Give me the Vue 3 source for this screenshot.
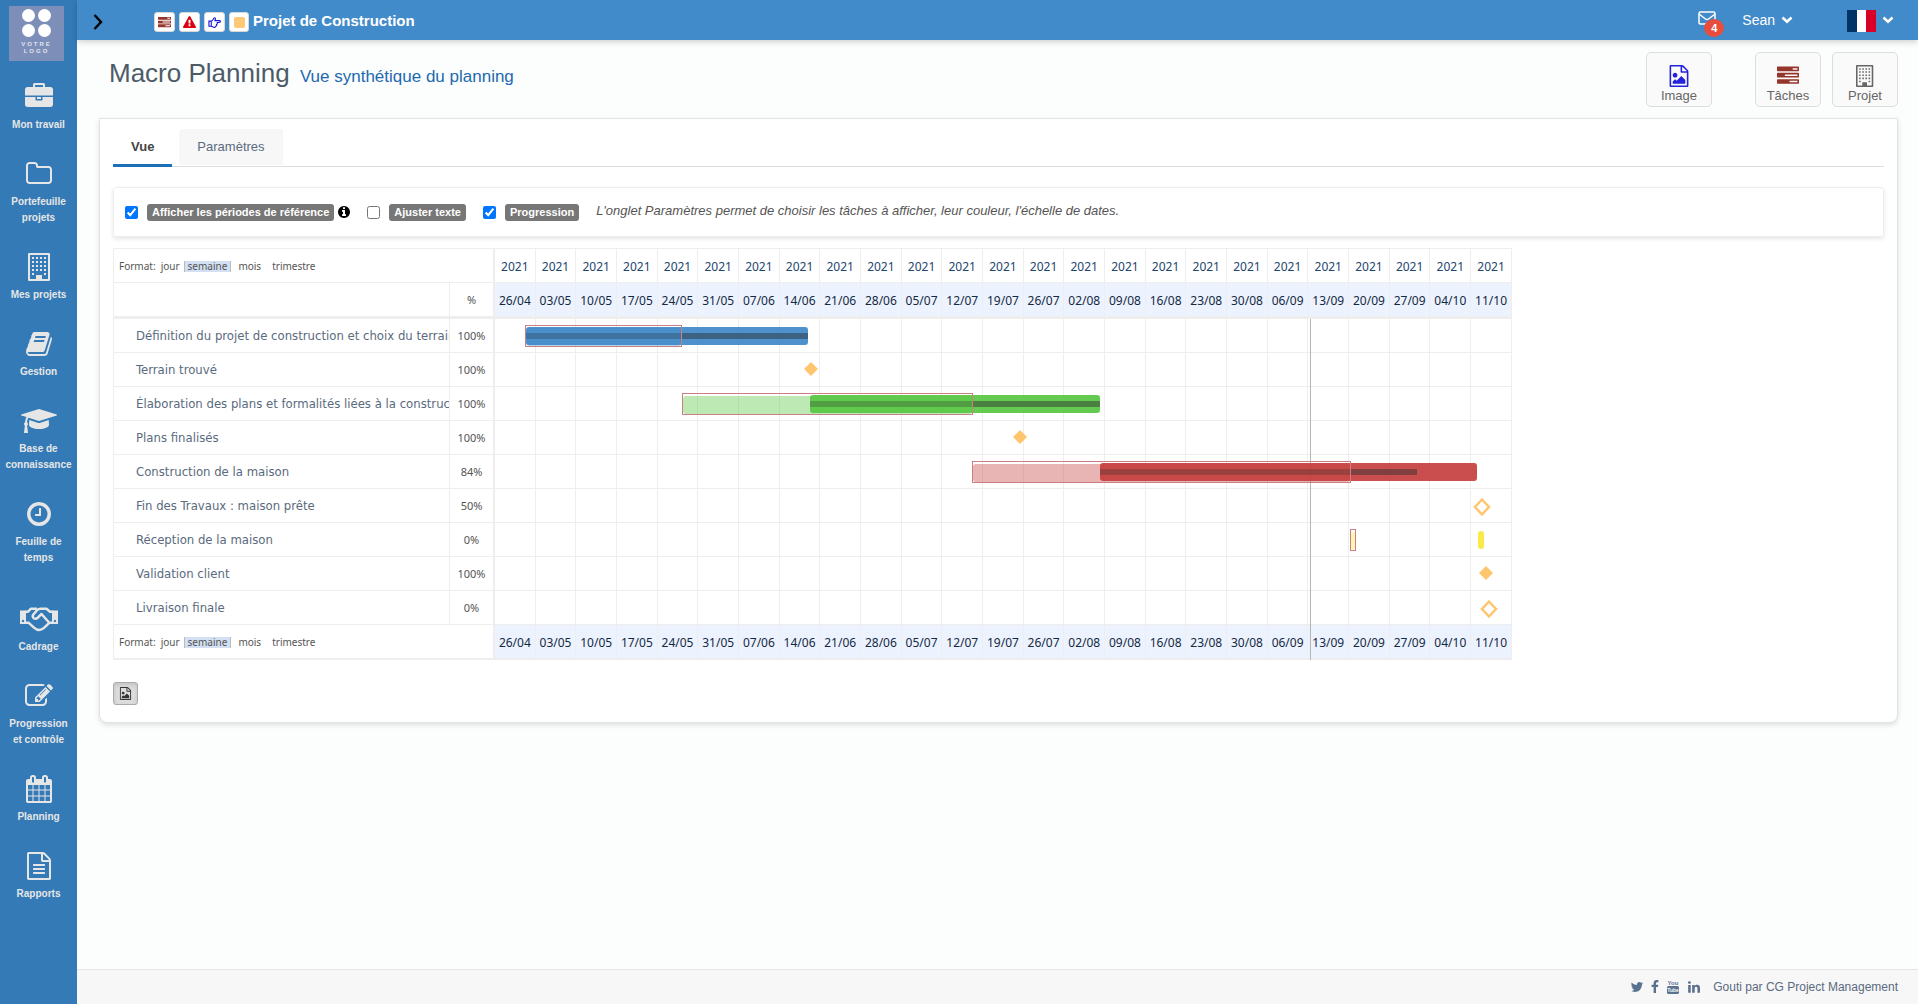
<script setup>
import { ref } from 'vue'

const icons = {
  briefcase: { box: '0 0 1792 1792', d: 'M640 256h512v-128h-512v128zm1152 640v480q0 66-47 113t-113 47h-1472q-66 0-113-47t-47-113v-480h672v160q0 26 19 45t45 19h320q26 0 45-19t19-45v-160h672zm-768 0v128h-256v-128h256zm768-480v384h-1792v-384q0-66 47-113t113-47h352v-160q0-40 28-68t68-28h576q40 0 68 28t28 68v160h352q66 0 113 47t47 113z' },
  folder: { box: '0 0 1792 1792', d: 'M1600 1312v-704q0-40-28-68t-68-28h-704q-40 0-68-28t-28-68v-64q0-40-28-68t-68-28h-320q-40 0-68 28t-28 68v960q0 40 28 68t68 28h1216q40 0 68-28t28-68zm128-704v704q0 92-66 158t-158 66h-1216q-92 0-158-66t-66-158v-960q0-92 66-158t158-66h320q92 0 158 66t66 158v32h672q92 0 158 66t66 158z' },
  building: { box: '0 0 22 28', d: 'M1 0h20q1 0 1 1v26q0 1-1 1h-20q-1 0-1-1v-26q0-1 1-1zM2 2v24h6v-4h6v4h6v-24zM4 4h2v2h-2zM8 4h2v2h-2zM12 4h2v2h-2zM16 4h2v2h-2zM4 8h2v2h-2zM8 8h2v2h-2zM12 8h2v2h-2zM16 8h2v2h-2zM4 12h2v2h-2zM8 12h2v2h-2zM12 12h2v2h-2zM16 12h2v2h-2zM4 16h2v2h-2zM8 16h2v2h-2zM12 16h2v2h-2zM16 16h2v2h-2zM4 20h2v2h-2zM16 20h2v2h-2z' },
  book: { box: '0 0 1792 1792', d: 'M1703 478q40 57 18 129l-275 906q-19 64-76.5 107.5t-122.5 43.5h-923q-77 0-148.5-53.5t-99.5-131.5q-24-67-2-127 0-4 3-27t4-37q1-8-3-21.5t-3-19.5q2-11 8-21t16.5-23.5 16.5-23.5q23-38 45-91.5t30-91.5q3-10 .5-30t-.5-28q3-11 17-28t17-23q21-36 42-92t25-90q1-9-2.5-32t.5-28q4-13 22-30.5t22-22.5q19-26 42.5-84.5t27.5-96.5q1-8-3-25.5t-2-26.5q2-8 9-18t18-23 17-21q8-12 16.5-30.5t15-35 16-36 19.5-32 26.5-23.5 36-11.5 47.5 5.5l-1 3q38-9 51-9h761q74 0 114 56t18 130l-274 906q-36 119-71.5 153.5t-128.5 34.5h-869q-27 0-38 15-11 16-1 43 24 70 144 70h923q29 0 56-15.5t35-41.5l300-987q7-22 5-57 38 15 59 43zm-1064 2q-4 13 2 22.5t20 9.5h608q13 0 25.5-9.5t16.5-22.5l21-64q4-13-2-22.5t-20-9.5h-608q-13 0-25.5 9.5t-16.5 22.5zm-83 256q-4 13 2 22.5t20 9.5h608q13 0 25.5-9.5t16.5-22.5l21-64q4-13-2-22.5t-20-9.5h-608q-13 0-25.5 9.5t-16.5 22.5z' },
  cap: { box: '0 0 2304 1792', d: 'M1774 836l18 316q4 69-82 128t-235 93.5-323 34.5-323-34.5-235-93.5-82-128l18-316 574 181q22 7 48 7t48-7zm530-324q0 23-22 31l-1120 352q-4 1-10 1t-10-1l-652-206q-43 34-71 111.5t-34 178.5q63 36 63 109 0 69-58 107l58 433q2 14-8 25-9 11-24 11h-192q-15 0-24-11-10-11-8-25l58-433q-58-38-58-107 0-73 65-111 11-207 98-330l-333-104q-22-8-22-31t22-31l1120-352q4-1 10-1t10 1l1120 352q22 8 22 31z' },
  clock: { box: '0 0 1792 1792', d: 'M1024 544v448q0 14-9 23t-23 9h-320q-14 0-23-9t-9-23v-64q0-14 9-23t23-9h224v-352q0-14 9-23t23-9h64q14 0 23 9t9 23zm416 352q0-148-73-273t-198-198-273-73-273 73-198 198-73 273 73 273 198 198 273 73 273-73 198-198 73-273zm224 0q0 209-103 385.5t-279.5 279.5-385.5 103-385.5-103-279.5-279.5-103-385.5 103-385.5 279.5-279.5 385.5-103 385.5 103 279.5 279.5 103 385.5z' },
  handshake: { box: '0 0 38 28', d: 'M0 5.500h6v13.500h-6zM3 14.800a1.200 1.200 0 1 0 .01 0zM32 5.500h6v13.500h-6zM35 14.800a1.200 1.200 0 1 0 .01 0z', line: 'M5 6.700h3l3-3h6M5 17.700h3.500l5.500 5q5 4.500 10 .2l5.500-5.200h3.500M33 6.700h-3l-3.500-3h-6q-2 0-3.500 1.500l-3.800 4.500q-1.200 2 .6 3.500 2 1.200 4-.5l3.700-3.700 7.500 8.500' },
  edit: { box: '0 0 1792 1792', d: 'M888 1184l116-116-152-152-116 116v56h96v96h56zm440-720q-16-16-33 1l-350 350q-17 17-1 33t33-1l350-350q17-17 1-33zm80 594v190q0 119-84.5 203.500t-203.500 84.500h-832q-119 0-203.500-84.500t-84.500-203.500v-832q0-119 84.500-203.500t203.500-84.500h832q63 0 117 25 15 7 18 23 3 17-9 29l-49 49q-14 14-32 8-23-6-45-6h-832q-66 0-113 47t-47 113v832q0 66 47 113t113 47h832q66 0 113-47t47-113v-126q0-13 9-22l64-64q15-15 35-7t20 29zm-96-738l288 288-672 672h-288v-288zm444 132l-92 92-288-288 92-92q28-28 68-28t68 28l152 152q28 28 28 68t-28 68z' },
  calendar: { box: '0 0 1792 1792', d: 'M192 1664h288v-288h-288v288zm352 0h320v-288h-320v288zm-352-352h288v-320h-288v320zm352 0h320v-320h-320v320zm-352-384h288v-288h-288v288zm736 736h320v-288h-320v288zm-384-736h320v-288h-320v288zm768 736h288v-288h-288v288zm-384-352h320v-320h-320v320zm-352-864v-288q0-13-9.500-22.500t-22.500-9.500h-64q-13 0-22.500 9.500t-9.500 22.500v288q0 13 9.500 22.500t22.500 9.500h64q13 0 22.500-9.500t9.500-22.500zm736 864h288v-320h-288v320zm-384-384h320v-288h-320v288zm384 0h288v-288h-288v288zm32-480v-288q0-13-9.500-22.500t-22.500-9.500h-64q-13 0-22.500 9.500t-9.500 22.500v288q0 13 9.500 22.500t22.500 9.500h64q13 0 22.500-9.500t9.500-22.500zm384-64v1280q0 52-38 90t-90 38h-1408q-52 0-90-38t-38-90v-1280q0-52 38-90t90-38h128v-96q0-66 47-113t113-47h64q66 0 113 47t47 113v96h384v-96q0-66 47-113t113-47h64q66 0 113 47t47 113v96h128q52 0 90 38t38 90z' },
  file: { box: '0 0 1792 1792', d: 'M1596 380q28 28 48 76t20 88v1152q0 40-28 68t-68 28h-1344q-40 0-68-28t-28-68v-1600q0-40 28-68t68-28h896q40 0 88 20t76 48zm-444-244v376h376q-10-29-22-41l-313-313q-12-12-41-22zm384 1528v-1024h-416q-40 0-68-28t-28-68v-416h-768v1536h1280zm-1024-864q0-14 9-23t23-9h704q14 0 23 9t9 23v64q0 14-9 23t-23 9h-704q-14 0-23-9t-9-23v-64zm736 224q14 0 23 9t9 23v64q0 14-9 23t-23 9h-704q-14 0-23-9t-9-23v-64q0-14 9-23t23-9h704zm0 256q14 0 23 9t9 23v64q0 14-9 23t-23 9h-704q-14 0-23-9t-9-23v-64q0-14 9-23t23-9h704z' },
  image: { box: '0 0 1792 1792', d: 'M1596 380q28 28 48 76t20 88v1152q0 40-28 68t-68 28h-1344q-40 0-68-28t-28-68v-1600q0-40 28-68t68-28h896q40 0 88 20t76 48zm-444-244v376h376q-10-29-22-41l-313-313q-12-12-41-22zm384 1528v-1024h-416q-40 0-68-28t-28-68v-416h-768v1536h1280zm-128-448v320h-1024v-192l192-192 128 128 384-384zm-832-192q-80 0-136-56t-56-136 56-136 136-56 136 56 56 136-56 136-136 56z' },
  tasks: { box: '0 0 1792 1792', d: 'M1024 1408h640v-128h-640v128zm-384-512h1024v-128h-1024v128zm640-512h384v-128h-384v128zm512 832v256q0 26-19 45t-45 19h-1664q-26 0-45-19t-19-45v-256q0-26 19-45t45-19h1664q26 0 45 19t19 45zm0-512v256q0 26-19 45t-45 19h-1664q-26 0-45-19t-19-45v-256q0-26 19-45t45-19h1664q26 0 45 19t19 45zm0-512v256q0 26-19 45t-45 19h-1664q-26 0-45-19t-19-45v-256q0-26 19-45t45-19h1664q26 0 45 19t19 45z' },
  warning: { box: '0 0 1792 1792', d: 'M1024 1375v-190q0-14-9.500-23.500t-22.500-9.500h-192q-13 0-22.500 9.500t-9.500 23.500v190q0 14 9.500 23.500t22.500 9.500h192q13 0 22.500-9.500t9.500-23.500zm-2-374l18-459q0-12-10-19-13-11-24-11h-220q-11 0-24 11-10 7-10 21l17 457q0 10 10 16.500t24 6.500h185q14 0 23.500-6.500t10.500-16.500zm-14-934l768 1408q35 63-2 126-17 29-46.500 46t-63.500 17h-1536q-34 0-63.500-17t-46.500-46q-37-63-2-126l768-1408q17-31 47-49t65-18 65 18 47 49z' },
  info: { box: '128 128 1536 1536', d: 'M1152 1376v-160q0-14-9-23t-23-9h-96v-512q0-14-9-23t-23-9h-320q-14 0-23 9t-9 23v160q0 14 9 23t23 9h96v320h-96q-14 0-23 9t-9 23v160q0 14 9 23t23 9h448q14 0 23-9t9-23zm-128-896v-160q0-14-9-23t-23-9h-192q-14 0-23 9t-9 23v160q0 14 9 23t23 9h192q14 0 23-9t9-23zm640 416q0 209-103 385.500t-279.500 279.500-385.500 103-385.500-103-279.500-279.500-103-385.500 103-385.500 279.500-279.500 385.500-103 385.500 103 279.500 279.500 103 385.500z' },
  twitter: { box: '0 0 1792 1792', d: 'M1684 408q-67 98-162 167 1 14 1 42 0 130-38 259.500t-115.500 248.500-184.500 210.500-258 146-323 54.500q-271 0-496-145 35 4 78 4 225 0 401-138-105-2-188-64.500t-114-159.500q33 5 61 5 43 0 85-11-112-23-185.500-111.500t-73.500-205.500v-4q68 38 146 41-66-44-105-115t-39-154q0-88 44-163 121 149 294.500 238.500t371.500 99.500q-8-38-8-74 0-134 94.500-228.500t228.500-94.500q140 0 236 102 109-21 205-78-37 115-142 178 93-10 186-50z' },
  facebook: { box: '400 0 1024 1792', d: 'M1343 12v264h-157q-86 0-116 36t-30 108v189h293l-39 296h-254v759h-306v-759h-255v-296h255v-218q0-186 104-288.500t277-102.500q147 0 228 12z' },
  linkedin: { box: '0 0 1792 1792', d: 'M477 625v991h-330v-991h330zm21-306q1 73-50.500 122t-135.500 49h-2q-82 0-132-49t-50-122q0-74 51.500-122.500t134.500-48.500 133 48.500 51 122.500zm1166 729v568h-329v-530q0-105-40.500-164.500t-126.500-59.500q-63 0-105.500 34.500t-63.500 85.500q-11 30-11 81v553h-329q2-399 2-647t-1-296l-1-48h329v144h-2q20-32 41-56t56.500-52 87-43.500 114.500-15.500q171 0 275 113.500t104 332.500z' }
}

const menu = [
  { icon: 'briefcase', label: 'Mon travail' },
  { icon: 'folder', label: 'Portefeuille projets' },
  { icon: 'building', label: 'Mes projets' },
  { icon: 'book', label: 'Gestion' },
  { icon: 'cap', label: 'Base de connaissance' },
  { icon: 'clock', label: 'Feuille de temps', last: true },
  { icon: 'handshake', label: 'Cadrage' },
  { icon: 'edit', label: 'Progression et contrôle' },
  { icon: 'calendar', label: 'Planning' },
  { icon: 'file', label: 'Rapports' }
]

const options = ref([
  { id: 'reference', label: 'Afficher les périodes de référence', checked: true, info: true },
  { id: 'ajuster', label: 'Ajuster texte', checked: false },
  { id: 'progression', label: 'Progression', checked: true }
])

const formats = ['jour', 'semaine', 'mois', 'trimestre']
const format = ref('semaine')

const weeks = [
  '26/04', '03/05', '10/05', '17/05', '24/05', '31/05', '07/06', '14/06', '21/06',
  '28/06', '05/07', '12/07', '19/07', '26/07', '02/08', '09/08', '16/08', '23/08',
  '30/08', '06/09', '13/09', '20/09', '27/09', '04/10', '11/10'
]

// Positions along the time axis, in pixels from the first week
const tasks = [
  { name: 'Définition du projet de construction et choix du terrain', pct: 100, color: 'blue', plan: [30, 157], bar: [31, 282] },
  { name: 'Terrain trouvé', pct: 100, milestone: 316 },
  { name: 'Élaboration des plans et formalités liées à la construction', pct: 100, color: 'green', plan: [187, 291], bar: [315, 290] },
  { name: 'Plans finalisés', pct: 100, milestone: 525 },
  { name: 'Construction de la maison', pct: 84, color: 'red', plan: [477, 379], bar: [605, 377] },
  { name: 'Fin des Travaux : maison prête', pct: 50, milestone: 987 },
  { name: 'Réception de la maison', pct: 0, color: 'yellow', plan: [855, 6], bar: [983, 6] },
  { name: 'Validation client', pct: 100, milestone: 991 },
  { name: 'Livraison finale', pct: 0, milestone: 994 }
]
const span = ([left, width]) => ({ left: left + 'px', width: width + 'px' })
</script>

<template>
  <div class="app">
    <aside class="sidebar">
      <a href="#" class="logo" aria-label="Accueil">
        <span class="dots"><i></i><i></i><i></i><i></i></span>
        <span class="logo-text">VOTRE<br>LOGO</span>
      </a>
      <nav class="menu">
        <a v-for="m in menu" :key="m.label" href="#" class="menu-item" :class="{ last: m.last }">
          <svg :viewBox="icons[m.icon].box" class="menu-icon">
            <path fill-rule="evenodd" :d="icons[m.icon].d" />
            <path v-if="icons[m.icon].line" :d="icons[m.icon].line" class="line" />
          </svg>
          <span>{{ m.label }}</span>
        </a>
      </nav>
    </aside>

    <div class="page">
      <header class="topbar">
        <button class="toggle" aria-label="Ouvrir le menu">
          <svg viewBox="0 0 10 16"><path d="M1.500 1l6.500 7-6.500 7" fill="none" stroke="#000" stroke-width="2.400" /></svg>
        </button>
        <button class="mini tasks" aria-label="Tâches"><svg :viewBox="icons.tasks.box"><path :d="icons.tasks.d" /></svg></button>
        <button class="mini alert" aria-label="Alertes"><svg :viewBox="icons.warning.box"><path :d="icons.warning.d" /></svg></button>
        <button class="mini hand" aria-label="Actions">
          <svg viewBox="0 0 14 13"><path d="M1 5h2.500v5.500h-2.500zM3.500 5c1.500-.3 2-2 3-3.200.8-.8 1.800-.1 1.600.8l-.6 1.900h4.700c1.500 0 1.500 2 0 2h-2.700M9.500 6.500c.9.800.6 1.900-.3 2.100.3.900 0 1.600-.7 1.800 0 .9-.5 1.300-1.300 1.300-1.500 0-2.300-.8-3.700-1.200" /></svg>
        </button>
        <button class="mini square" aria-label="Jalon"><i></i></button>
        <strong class="project">Projet de Construction</strong>
        <button class="mail" aria-label="Messages">
          <svg viewBox="0 0 18 14"><rect x="1" y="1" width="16" height="12" rx="1.500" /><path d="M1 3l6.500 5q1.500 1 3 0l6.500-5" /></svg>
          <span class="badge">4</span>
        </button>
        <button class="user">Sean
          <svg viewBox="0 0 12 8"><path d="M1.500 1.500l4.500 4.200 4.500-4.200" /></svg>
        </button>
        <button class="lang" aria-label="Français">
          <span class="flag"><i></i><i></i><i></i></span>
          <svg viewBox="0 0 12 8"><path d="M1.500 1.500l4.500 4.200 4.500-4.200" /></svg>
        </button>
      </header>

      <section class="heading">
        <h1>Macro Planning <small>Vue synthétique du planning</small></h1>
        <div class="actions">
          <button class="action image"><svg :viewBox="icons.image.box"><path :d="icons.image.d" /></svg>Image</button>
          <button class="action tasks"><svg :viewBox="icons.tasks.box"><path :d="icons.tasks.d" /></svg>Tâches</button>
          <button class="action building"><svg :viewBox="icons.building.box"><path fill-rule="evenodd" :d="icons.building.d" /></svg>Projet</button>
        </div>
      </section>

      <main class="panel">
        <div class="tabs">
          <button class="tab active">Vue</button>
          <button class="tab">Paramètres</button>
        </div>

        <div class="options">
          <div v-for="o in options" :key="o.id" class="option">
            <input :id="o.id" v-model="o.checked" type="checkbox">
            <label :for="o.id">{{ o.label }}</label>
            <svg v-if="o.info" :viewBox="icons.info.box"><path :d="icons.info.d" /></svg>
          </div>
          <em>L'onglet Paramètres permet de choisir les tâches à afficher, leur couleur, l'échelle de dates.</em>
        </div>

        <div class="gantt">
          <table>
            <colgroup><col class="col-name"><col class="col-pct"><col v-for="w in weeks" :key="w"></colgroup>
            <thead>
              <tr>
                <th colspan="2" class="format side">
                  <span>Format:</span>
                  <button v-for="f in formats" :key="f" :class="{ on: f === format }" @click="format = f">{{ f }}</button>
                </th>
                <th v-for="w in weeks" :key="w" class="year">2021</th>
              </tr>
              <tr class="dates">
                <th></th>
                <th class="pct side">%</th>
                <th v-for="w in weeks" :key="w" class="week">{{ w }}</th>
              </tr>
            </thead>
            <tbody>
              <tr v-for="t in tasks" :key="t.name">
                <td class="name">{{ t.name }}</td>
                <td class="pct side">{{ t.pct }}%</td>
                <td v-for="(w, i) in weeks" :key="w" class="cell">
                  <div v-if="i === 0" class="lane" :class="t.color">
                    <template v-if="t.bar">
                      <span class="plan" :style="span(t.plan)"></span>
                      <span class="bar" :style="span(t.bar)"><i :style="{ width: t.pct + '%' }"></i></span>
                    </template>
                    <svg v-else-if="t.pct === 100" class="stone" viewBox="0 0 20 20" :style="{ left: t.milestone + 'px' }"><path d="M10 3l7 7-7 7-7-7z" fill="#ffc56e" /></svg>
                    <svg v-else class="stone open" viewBox="0 0 20 20" :style="{ left: t.milestone + 'px' }"><path d="M10 2.500l7 7.500-7 7.500-7-7.500z" fill="#fff" stroke="#ffc56e" stroke-width="2.500" /></svg>
                  </div>
                </td>
              </tr>
            </tbody>
            <tfoot>
              <tr>
                <th colspan="2" class="format side">
                  <span>Format:</span>
                  <button v-for="f in formats" :key="f" :class="{ on: f === format }" @click="format = f">{{ f }}</button>
                </th>
                <th v-for="w in weeks" :key="w" class="week">{{ w }}</th>
              </tr>
            </tfoot>
          </table>
          <div class="today"></div>
        </div>

        <button class="export" aria-label="Exporter en image"><svg :viewBox="icons.image.box"><path :d="icons.image.d" /></svg></button>
      </main>

      <footer class="footer">
        <a href="#" aria-label="Twitter"><svg :viewBox="icons.twitter.box"><path :d="icons.twitter.d" /></svg></a>
        <a href="#" aria-label="Facebook"><svg class="fb" :viewBox="icons.facebook.box"><path :d="icons.facebook.d" /></svg></a>
        <a href="#" aria-label="YouTube">
          <svg viewBox="0 0 14 14">
            <text x="7" y="5" text-anchor="middle" class="yt">You</text>
            <rect x="1" y="6" width="12" height="8" rx="1.500" />
            <text x="7" y="12" text-anchor="middle" class="yt tube">Tube</text>
          </svg>
        </a>
        <a href="#" aria-label="LinkedIn"><svg :viewBox="icons.linkedin.box"><path :d="icons.linkedin.d" /></svg></a>
        <a href="#" class="credit">Gouti par CG Project Management</a>
      </footer>
    </div>
  </div>
</template>

<style>
body { background: #fcfdfd; }
</style>

<style scoped>
.app {
  display: flex;
  min-height: 100vh;
  font-family: "Liberation Sans", Arial, sans-serif;
  font-size: 13px;
  color: #555;
}
.app * { box-sizing: border-box; }
button { font: inherit; color: inherit; background: none; border: 0; padding: 0; margin: 0; cursor: pointer; }
a { text-decoration: none; color: inherit; }
svg { display: block; fill: currentColor; }

/* Sidebar */
.sidebar { width: 77px; flex: none; background: #337ab7; }
.logo {
  width: 55px; height: 55px; margin: 6px auto 22px 9px; padding-top: 3px;
  display: flex; flex-direction: column; align-items: center; gap: 4px;
  background: #7d8fb8; color: #e0e4ee;
}
.dots { display: grid; grid-template-columns: 13px 13px; gap: 2px 3px; }
.dots i { height: 13px; border-radius: 50%; background: #fff; }
.logo-text { font: bold 6px/7px "Liberation Sans", Arial, sans-serif; letter-spacing: 2px; text-align: center; }
.menu { display: flex; flex-direction: column; gap: 27px; }
.menu-item {
  display: flex; flex-direction: column; align-items: center; gap: 6px;
  color: #e6e6e6; font-size: 10px; line-height: 16px; font-weight: bold; text-align: center;
}
.menu-item.last { margin-bottom: 12px; }
.menu-item span { width: 70px; }
.menu-icon { height: 28px; }
.menu-icon .line { fill: none; stroke: currentColor; stroke-width: 2.500; stroke-linejoin: round; }

/* Top bar */
.page { flex: 1; min-width: 0; display: flex; flex-direction: column; background: #fcfdfd; }
.topbar {
  height: 40px; flex: none; display: flex; align-items: center; gap: 4px;
  padding: 0 24px 0 16px; background: #428bca; color: #fff;
  box-shadow: 0 2px 6px rgba(0, 0, 0, .18);
}
.toggle { width: 10px; margin-right: 47px; padding-top: 4px; }
.mini {
  width: 21px; height: 20px; margin-top: 4px; display: grid; place-items: center;
  background: #fff; border: 1px solid #d8d8d8; border-radius: 3px;
}
.mini svg { width: 13px; height: 13px; }
.mini.tasks, .action.tasks svg { color: #95352b; }
.mini.alert { color: #dd0011; }
.mini.hand svg { fill: none; stroke: #1616d8; stroke-width: 1.200; }
.mini.square { width: 20px; }
.mini.square i { width: 11px; height: 11px; border-radius: 2px; background: #ffc876; }
.project { flex: 1; font-size: 15px; line-height: 20px; margin-top: 2px; }
.mail { position: relative; width: 18px; margin: 0 22px 4px 0; }
.mail svg { fill: none; stroke: #fff; stroke-width: 1.500; }
.badge {
  position: absolute; left: 6px; top: 8px; width: 20px; height: 18px; border-radius: 50%;
  background: #e74c3c; font-size: 11px; line-height: 18px; font-weight: bold;
}
.user, .lang { display: flex; align-items: center; gap: 6px; font-size: 14px; }
.user svg, .lang svg { width: 12px; fill: none; stroke: #fff; stroke-width: 2.500; }
.user { margin-right: 50px; }
.flag { display: grid; grid-template-columns: 1fr 1fr 1fr; width: 29px; height: 22px; margin-top: 2px; }
.flag i:nth-child(1) { background: #003366; }
.flag i:nth-child(2) { background: #fff; }
.flag i:nth-child(3) { background: #d80027; }

/* Page heading */
.heading { height: 78px; display: flex; justify-content: space-between; padding: 12px 20px 0 32px; }
h1 { margin: 6px 0 0; font-size: 26px; line-height: 30px; font-weight: normal; color: #4d5b69; }
h1 small { margin-left: 3px; font-size: 17px; color: #2269b0; }
.actions { display: flex; gap: 11px; }
.action {
  width: 66px; height: 55px; padding: 12px 0 0; display: flex; flex-direction: column; align-items: center; gap: 1px;
  background: #fafafa; border: 1px solid #ddd; border-radius: 5px; color: #666; line-height: 16px;
}
.action.image { margin-right: 32px; }
.action svg { height: 22px; }
.action.image svg { color: #2222dd; }

/* Panel */
.panel {
  margin: 0 20px 0 22px; padding: 10px 13px 17px; background: #fff;
  border: 1px solid #e2e3e3; border-radius: 0 0 8px 8px; box-shadow: 0 2px 5px rgba(0, 0, 0, .12);
}
.tabs { display: flex; align-items: flex-start; gap: 7px; height: 38px; border-bottom: 1px solid #ddd; }
.tab { height: 36px; padding: 0 18px 2px; background: #f7f7f7; border-radius: 4px 0 0; color: #5a6a80; }
.tab.active { height: 38px; padding-bottom: 0; background: none; border-bottom: 3px solid #1d6fb8; border-radius: 0; color: #444; font-weight: bold; }
.options {
  display: flex; align-items: center; height: 50px; margin: 20px 0 11px; padding: 0 11px;
  border: 1px solid #eee; border-radius: 3px; box-shadow: 0 2px 4px rgba(0, 0, 0, .1);
}
.option { display: flex; align-items: center; margin-right: 17px; }
.option input { width: 13px; height: 13px; margin: 0 9px 0 0; }
.option label {
  padding: 0 5px; background: #777; border-radius: 3px; color: #fff;
  font-size: 11px; line-height: 17px; font-weight: bold;
}
.option svg { width: 12px; margin-left: 4px; color: #000; }
.options em { padding-bottom: 3px; }

/* Gantt chart */
.gantt { position: relative; width: 1399px; }
table {
  width: 100%; table-layout: fixed; border-collapse: separate; border-spacing: 0;
  border: solid #eee; border-width: 1px 0 0 1px; font-family: "Noto Sans", Tahoma, sans-serif; font-size: 12px;
}
.col-name { width: 336px; }
.col-pct { width: 45px; }
th, td { height: 34px; padding: 2px 0 0; font-weight: normal; line-height: 16px; text-align: center; white-space: nowrap; border: solid #eee; border-width: 0 1px 1px 0; }
.dates th { height: 36px; border-bottom-width: 3px; }
tfoot th { height: 35px; border-bottom-width: 2px; }
th.side, td.side { border-right-width: 2px; }
td.name {
  padding: 0 0 0 22px; overflow: hidden; text-align: left; color: #5a6a7e;
  font-family: "DejaVu Sans Condensed", Tahoma, "Noto Sans", sans-serif; font-size: 13px;
}
td.pct, th.pct { padding: 0; font-size: 11px; color: #555; }
.year { color: #1d456e; }
.week { background: #ecf3ff; color: #15293f; }
th.format { padding: 0 0 0 5px; font-size: 10px; text-align: left; color: #555; }
.format button { margin-left: 3px; padding: 0 3px; border: solid transparent; border-width: 0 1px; line-height: 11px; }
.format button.on { margin: 0; background: #d3dff2; border-color: #bbb; }
.format span { margin-right: -2px; }
.cell { padding: 0; }
.lane { position: relative; height: 33px; }
.plan, .bar, .stone { position: absolute; }
.plan { top: 6px; height: 22px; border: 1px solid #c97f84; z-index: 2; }
.plan::before { content: ""; position: absolute; inset: 2px 0 0; border-radius: 3px; background: var(--tone); opacity: .4; }
.bar { top: 8px; height: 18px; border-radius: 3px; background: var(--tone); opacity: .94; z-index: 1; }
.bar i { position: absolute; left: 0; top: 6px; height: 6px; background: rgba(34, 34, 34, .47); }
.blue { --tone: #438bca; }
.green { --tone: #5bc846; }
.red { --tone: #c74343; }
.yellow { --tone: #f9e83f; }
.stone { top: 6px; width: 20px; height: 20px; margin-left: -10px; z-index: 1; }
.stone.open { top: 8px; }
.today { position: absolute; left: 1197px; top: 71px; bottom: 0; border-left: 1px solid #b4b4b4; z-index: 0; }

.export {
  display: grid; place-items: center; width: 25px; height: 23px; margin-top: 22px;
  background: #ddd; border: 1px solid #aaa; border-radius: 3px; box-shadow: inset 0 2px 4px rgba(0, 0, 0, .12); color: #333;
}
.export svg { width: 13px; height: 13px; }

/* Footer */
.footer {
  height: 35px; margin-top: auto; padding: 0 20px; display: flex; align-items: center; justify-content: flex-end; gap: 7px;
  background: #f7f7f7; border-top: 1px solid #e4e5e5; color: #5a7290; font-size: 12px;
}
.footer svg { width: 14px; height: 14px; }
.footer .fb { width: 8px; }
.yt { font: bold 6px "Liberation Sans", Arial, sans-serif; }
.tube { font-size: 5px; fill: #f7f7f7; }
.credit { margin-left: 5px; color: #5a6a80; }
</style>
